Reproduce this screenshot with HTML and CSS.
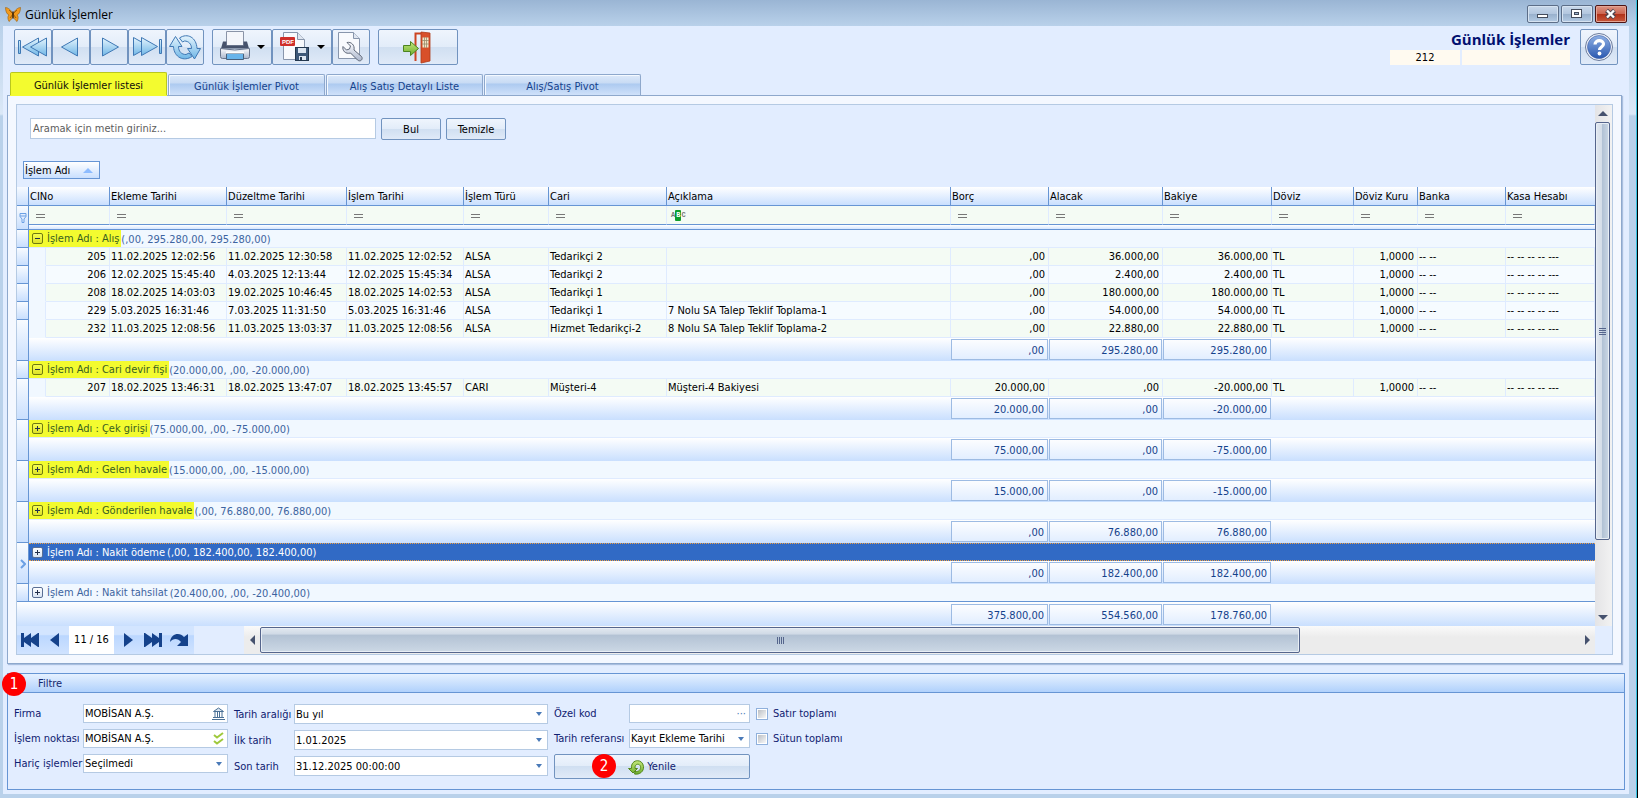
FILE: index.html
```html
<!DOCTYPE html>
<html lang="tr">
<head>
    <meta charset="UTF-8">
    <meta name="viewport" content="width=device-width, initial-scale=1.0">
    <title>Günlük İşlemler</title>
    <link rel="stylesheet" href="styles.css">
</head>
<body>

    <!-- Shared gradients for the icons -->
    <svg class="defs" aria-hidden="true">
        <defs>
            <linearGradient id="iceBlue" x1="0" y1="0" x2="0" y2="1">
                <stop offset="0" stop-color="#e4f4fd"/><stop offset="1" stop-color="#6fb6e6"/>
            </linearGradient>
            <linearGradient id="steel" x1="0" y1="0" x2="0" y2="1">
                <stop offset="0" stop-color="#fdfdff"/><stop offset="1" stop-color="#aab6cc"/>
            </linearGradient>
            <linearGradient id="leaf" x1="0" y1="0" x2="0" y2="1">
                <stop offset="0" stop-color="#c4e77c"/><stop offset="1" stop-color="#6cae2c"/>
            </linearGradient>
            <linearGradient id="deepBlue" x1="0" y1="0" x2="0" y2="1">
                <stop offset="0" stop-color="#8fb0e4"/><stop offset="1" stop-color="#2a58b0"/>
            </linearGradient>
        </defs>
    </svg>

    <div class="window">

        <!-- Title bar -->
        <header class="title-bar">
            <svg class="app-icon" viewBox="0 0 16 15">
                <path d="M8 6.500C6 3 3 .5 .5 .5 .6 4 1.500 7 4 8 2.500 9 2.500 12 4 14.500 6 13 7.500 11 8 8z" fill="#f29a1c" stroke="#9a5c08" stroke-width=".6"/>
                <path d="M8 6.500C10 3 13 .5 15.500 .5 15.400 4 14.500 7 12 8 13.500 9 13.500 12 12 14.500 10 13 8.500 11 8 8z" fill="#f29a1c" stroke="#9a5c08" stroke-width=".6"/>
                <path d="M4 3l4 4 4-4M5 11l3-4 3 4" stroke="#8a5208" stroke-width=".8" fill="none"/>
                <path d="M8 4.500v7" stroke="#3c2408" stroke-width="1.400"/>
            </svg>
            <h1>Günlük İşlemler</h1>
            <div class="window-buttons">
                <button type="button" aria-label="Simge durumuna küçült"><svg viewBox="0 0 30 16"><rect x="9.500" y="8.500" width="10" height="3" fill="#fff" stroke="#444c5c"/></svg></button>
                <button type="button" aria-label="Ekranı kapla"><svg viewBox="0 0 30 16"><rect x="9.500" y="3.500" width="10" height="8" fill="#fff" stroke="#444c5c"/><rect x="12.500" y="6.500" width="4" height="2" fill="#9db4cf" stroke="#444c5c"/></svg></button>
                <button type="button" class="close" aria-label="Kapat"><svg viewBox="0 0 30 16"><path d="M10.500 4.500l8 7m0-7l-8 7" stroke="#4c4450" stroke-width="4.400"/><path d="M11 4.500l7 7m0-7l-7 7" stroke="#fff" stroke-width="2.400"/></svg></button>
            </div>
        </header>

        <main class="content">

            <!-- Toolbar -->
            <div class="toolbar">
                <div class="tool-group">
                    <button type="button" class="tool" aria-label="İlk kayıt"><svg viewBox="0 0 36 34" fill="url(#iceBlue)" stroke="#3f78b4"><path d="M3.500 10.500h2v13h-2zM23.500 8v18L7.500 17z"/><path d="M31.500 8v18l-16-9z"/></svg></button>
                    <button type="button" class="tool" aria-label="Önceki kayıt"><svg viewBox="0 0 36 34" fill="url(#iceBlue)" stroke="#3f78b4"><path d="M24.500 8v18L8.500 17z"/></svg></button>
                    <button type="button" class="tool" aria-label="Sonraki kayıt"><svg viewBox="0 0 36 34" fill="url(#iceBlue)" stroke="#3f78b4"><path d="M11.500 8v18l16-9z"/></svg></button>
                    <button type="button" class="tool" aria-label="Son kayıt"><svg viewBox="0 0 36 34" fill="url(#iceBlue)" stroke="#3f78b4"><path d="M4.500 7.500v18l16-9z"/><path d="M12.500 7.500v18l16-9z"/><path d="M30.500 9.500h2v14h-2z"/></svg></button>
                    <button type="button" class="tool" aria-label="Yenile"><svg viewBox="0 0 36 34" fill="url(#iceBlue)" stroke="#3f78b4"><path d="M2.500 16.500 8.500 6.500l6.500 10h-3.500c0 5 3 8 7.500 8l3-1.500 3 3.500c-8 5.500-18 1-18.500-10z"/><path d="M33.500 18.500 27.500 29l-7-10.500h4c0-4.500-3-7.500-7-7.500l-2 1-3-4c8-5.500 17-.5 17.500 10.500z"/></svg></button>
                </div>
                <div class="tool-group">
                    <button type="button" class="tool split" aria-label="Yazdır">
                        <svg viewBox="0 0 44 34"><path d="M13.500 1.500h17v14h-17z" fill="#f4f6fb" stroke="#8a94a8"/><path d="M10 11.500h3.500v4h17v-4h3.500l2 7H8z" fill="#46526c"/><path d="M7.500 18.500q14 3 29 0v8q0 2-2 2h-25q-2 0-2-2z" fill="url(#steel)" stroke="#68748c"/><path d="M13.500 23.500h17v6h-17z" fill="#69b4ea" stroke="#48607c"/><path d="M13 22.500h18" stroke="#fff" stroke-width="2"/></svg>
                        <span class="caret"></span>
                    </button>
                    <button type="button" class="tool split" aria-label="PDF olarak kaydet">
                        <svg viewBox="0 0 44 34"><path d="M10.500 2.500h14l7 7v20h-21z" fill="#f8fafd" stroke="#8896ac"/><path d="M24.500 2.500v7h7" fill="#dfe6f0" stroke="#8896ac"/><rect x="7" y="7" width="15" height="9" rx="1" fill="#cf2f2a"/><text x="9" y="14" class="pdf-label">PDF</text><rect x="22.500" y="17.500" width="13" height="13" fill="#3d5878" stroke="#24384f"/><path d="M25 18h8v5h-8zM26 26h7v4h-7z" fill="#dce6f1"/><path d="M27 27h2v3h-2z" fill="#24384f"/></svg>
                        <span class="caret"></span>
                    </button>
                    <button type="button" class="tool" aria-label="Ayarlar"><svg viewBox="0 0 36 34"><path d="M5.500 2.500h15l6 6v20h-21z" fill="#f8fafd" stroke="#8896ac"/><path d="M20.500 2.500v6h6" fill="#dfe6f0" stroke="#8896ac"/><path d="M14 12.500l3.500 3.500-1 3-3 1-3.500-3.500c-1 4 2.500 8 7.500 6.500l7 7c3 2.500 6-1 4-3.500l-7.500-6.500c1-5-3-8.500-7-7.500z" fill="url(#steel)" stroke="#5f6878"/></svg></button>
                </div>
                <button type="button" class="tool exit" aria-label="Çıkış"><svg viewBox="0 0 36 34"><path d="M15.500 31v-27.500h8" fill="none" stroke="#cc4422" stroke-width="2"/><path d="M21 2l9 1v28l-9 2z" fill="#d8502a" stroke="#b03a18" stroke-width=".8"/><path d="M22.500 7.500h6v10h-6z" fill="#f2e6c8"/><path d="M24.500 7v11M26.500 7v11M22 10.500h7M22 14h7" stroke="#9a8c6a" stroke-width=".8"/><path d="M3.500 15.500h7v-4l8 7-8 7v-4h-7z" fill="url(#leaf)" stroke="#4c8420"/></svg></button>
                <div class="form-title">
                    <h2>Günlük İşlemler</h2>
                    <div class="form-codes"><span>212</span><span></span></div>
                </div>
                <button type="button" class="tool" aria-label="Yardım"><svg viewBox="0 0 36 34"><circle cx="18" cy="17" r="13.500" fill="#eef2fa" stroke="#6c7c9c"/><circle cx="18" cy="17" r="11.500" fill="url(#deepBlue)" stroke="#3f62a8" stroke-width=".6"/><path d="M14 14.500c0-5 8.500-5 8.500-.5 0 3-4 3-4 6" fill="none" stroke="#fff" stroke-width="3.200"/><circle cx="18.500" cy="23.500" r="1.900" fill="#fff"/></svg></button>
            </div>

            <!-- Tabs -->
            <nav class="tabs">
                <button type="button" class="tab active">Günlük İşlemler listesi</button>
                <button type="button" class="tab">Günlük İşlemler Pivot</button>
                <button type="button" class="tab">Alış Satış Detaylı Liste</button>
                <button type="button" class="tab">Alış/Satış Pivot</button>
            </nav>

            <section class="tab-page">
                <div class="grid-box">
                    <div class="grid-main">
                        <div class="search-bar">
                            <input type="text" class="search-input" placeholder="Aramak için metin giriniz..." aria-label="Ara">
                            <button type="button" class="btn">Bul</button>
                            <button type="button" class="btn">Temizle</button>
                        </div>
                        <button type="button" class="group-chip">İşlem Adı <span class="sort-up"></span></button>

                        <table class="data-grid">
                            <colgroup>
                                <col class="w-head"><col class="w-indent"><col class="w-no"><col class="w-date"><col class="w-edit"><col class="w-date"><col class="w-type"><col class="w-cari"><col><col class="w-borc"><col class="w-alacak"><col class="w-bakiye"><col class="w-doviz"><col class="w-kur"><col class="w-banka"><col class="w-kasa">
                            </colgroup>
                            <thead>
                                <tr>
                                    <th class="rh"></th><th colspan="2">CINo</th><th>Ekleme Tarihi</th><th>Düzeltme Tarihi</th><th>İşlem Tarihi</th><th>İşlem Türü</th><th>Cari</th><th>Açıklama</th><th>Borç</th><th>Alacak</th><th>Bakiye</th><th>Döviz</th><th>Döviz Kuru</th><th>Banka</th><th>Kasa Hesabı</th>
                                </tr>
                                <tr class="filter-row">
                                    <td class="rh" rowspan="2"><svg class="funnel" viewBox="0 0 8 10"><path d="M1 .5h6v3L5 6v3.500H3V6L1 3.500zM1 3h6" fill="#e2edff" stroke="#6ba0e4"/></svg></td>
                                    <td colspan="2"><i class="eq"></i></td><td><i class="eq"></i></td><td><i class="eq"></i></td><td><i class="eq"></i></td><td><i class="eq"></i></td><td><i class="eq"></i></td>
                                    <td><span class="abc">A<b>B</b>C</span></td>
                                    <td><i class="eq"></i></td><td><i class="eq"></i></td><td><i class="eq"></i></td><td><i class="eq"></i></td><td><i class="eq"></i></td><td><i class="eq"></i></td><td><i class="eq"></i></td>
                                </tr>
                                <tr class="divider-row"><td colspan="15"></td></tr>
                            </thead>
                            <tbody>
                                <!-- Alış -->
                                <tr class="group-row">
                                    <td class="rh"></td>
                                    <td colspan="15"><div class="group-line"><span class="mark"><button type="button" class="toggle open" aria-label="Daralt"></button>İşlem Adı : Alış</span> (,00, 295.280,00, 295.280,00)</div></td>
                                </tr>
                                <tr class="row">
                                    <td class="rh"></td><td class="indent"></td><td class="num">205</td><td>11.02.2025 12:02:56</td><td>11.02.2025 12:30:58</td><td>11.02.2025 12:02:52</td><td>ALSA</td><td>Tedarikçi 2</td><td></td><td class="num">,00</td><td class="num">36.000,00</td><td class="num">36.000,00</td><td>TL</td><td class="num">1,0000</td><td>-- --</td><td>-- -- -- -- ---</td>
                                </tr>
                                <tr class="row alt">
                                    <td class="rh"></td><td class="indent"></td><td class="num">206</td><td>12.02.2025 15:45:40</td><td>4.03.2025 12:13:44</td><td>12.02.2025 15:45:34</td><td>ALSA</td><td>Tedarikçi 2</td><td></td><td class="num">,00</td><td class="num">2.400,00</td><td class="num">2.400,00</td><td>TL</td><td class="num">1,0000</td><td>-- --</td><td>-- -- -- -- ---</td>
                                </tr>
                                <tr class="row">
                                    <td class="rh"></td><td class="indent"></td><td class="num">208</td><td>18.02.2025 14:03:03</td><td>19.02.2025 10:46:45</td><td>18.02.2025 14:02:53</td><td>ALSA</td><td>Tedarikçi 1</td><td></td><td class="num">,00</td><td class="num">180.000,00</td><td class="num">180.000,00</td><td>TL</td><td class="num">1,0000</td><td>-- --</td><td>-- -- -- -- ---</td>
                                </tr>
                                <tr class="row alt">
                                    <td class="rh"></td><td class="indent"></td><td class="num">229</td><td>5.03.2025 16:31:46</td><td>7.03.2025 11:31:50</td><td>5.03.2025 16:31:46</td><td>ALSA</td><td>Tedarikçi 1</td><td>7 Nolu SA Talep Teklif Toplama-1</td><td class="num">,00</td><td class="num">54.000,00</td><td class="num">54.000,00</td><td>TL</td><td class="num">1,0000</td><td>-- --</td><td>-- -- -- -- ---</td>
                                </tr>
                                <tr class="row">
                                    <td class="rh" rowspan="2"></td><td class="indent"></td><td class="num">232</td><td>11.03.2025 12:08:56</td><td>11.03.2025 13:03:37</td><td>11.03.2025 12:08:56</td><td>ALSA</td><td>Hizmet Tedarikçi-2</td><td>8 Nolu SA Talep Teklif Toplama-2</td><td class="num">,00</td><td class="num">22.880,00</td><td class="num">22.880,00</td><td>TL</td><td class="num">1,0000</td><td>-- --</td><td>-- -- -- -- ---</td>
                                </tr>
                                <tr class="sum-row">
                                    <td colspan="8"></td><td><div class="sum">,00</div></td><td><div class="sum">295.280,00</div></td><td><div class="sum">295.280,00</div></td><td colspan="4"></td>
                                </tr>

                                <!-- Cari devir fişi -->
                                <tr class="group-row">
                                    <td class="rh"></td>
                                    <td colspan="15"><div class="group-line"><span class="mark"><button type="button" class="toggle open" aria-label="Daralt"></button>İşlem Adı : Cari devir fişi</span> (20.000,00, ,00, -20.000,00)</div></td>
                                </tr>
                                <tr class="row">
                                    <td class="rh" rowspan="2"></td><td class="indent"></td><td class="num">207</td><td>18.02.2025 13:46:31</td><td>18.02.2025 13:47:07</td><td>18.02.2025 13:45:57</td><td>CARI</td><td>Müşteri-4</td><td>Müşteri-4 Bakiyesi</td><td class="num">20.000,00</td><td class="num">,00</td><td class="num">-20.000,00</td><td>TL</td><td class="num">1,0000</td><td>-- --</td><td>-- -- -- -- ---</td>
                                </tr>
                                <tr class="sum-row">
                                    <td colspan="8"></td><td><div class="sum">20.000,00</div></td><td><div class="sum">,00</div></td><td><div class="sum">-20.000,00</div></td><td colspan="4"></td>
                                </tr>

                                <!-- Collapsed groups -->
                                <tr class="group-row">
                                    <td class="rh" rowspan="2"></td>
                                    <td colspan="15"><div class="group-line"><span class="mark"><button type="button" class="toggle" aria-label="Genişlet"></button>İşlem Adı : Çek girişi</span> (75.000,00, ,00, -75.000,00)</div></td>
                                </tr>
                                <tr class="sum-row">
                                    <td colspan="8"></td><td><div class="sum">75.000,00</div></td><td><div class="sum">,00</div></td><td><div class="sum">-75.000,00</div></td><td colspan="4"></td>
                                </tr>
                                <tr class="group-row">
                                    <td class="rh" rowspan="2"></td>
                                    <td colspan="15"><div class="group-line"><span class="mark"><button type="button" class="toggle" aria-label="Genişlet"></button>İşlem Adı : Gelen havale</span> (15.000,00, ,00, -15.000,00)</div></td>
                                </tr>
                                <tr class="sum-row">
                                    <td colspan="8"></td><td><div class="sum">15.000,00</div></td><td><div class="sum">,00</div></td><td><div class="sum">-15.000,00</div></td><td colspan="4"></td>
                                </tr>
                                <tr class="group-row">
                                    <td class="rh" rowspan="2"></td>
                                    <td colspan="15"><div class="group-line"><span class="mark"><button type="button" class="toggle" aria-label="Genişlet"></button>İşlem Adı : Gönderilen havale</span> (,00, 76.880,00, 76.880,00)</div></td>
                                </tr>
                                <tr class="sum-row">
                                    <td colspan="8"></td><td><div class="sum">,00</div></td><td><div class="sum">76.880,00</div></td><td><div class="sum">76.880,00</div></td><td colspan="4"></td>
                                </tr>
                                <tr class="group-row selected">
                                    <td class="rh" rowspan="2"><svg class="row-arrow" viewBox="0 0 6 10"><path d="M1 1l4 4-4 4" fill="none" stroke="#6ba0e4" stroke-width="2"/></svg></td>
                                    <td colspan="15"><div class="group-line"><span class="plain"><button type="button" class="toggle" aria-label="Genişlet"></button>İşlem Adı : Nakit ödeme</span> (,00, 182.400,00, 182.400,00)</div></td>
                                </tr>
                                <tr class="sum-row">
                                    <td colspan="8"></td><td><div class="sum">,00</div></td><td><div class="sum">182.400,00</div></td><td><div class="sum">182.400,00</div></td><td colspan="4"></td>
                                </tr>
                                <tr class="group-row last">
                                    <td class="rh"></td>
                                    <td colspan="15"><div class="group-line"><span class="plain"><button type="button" class="toggle" aria-label="Genişlet"></button>İşlem Adı : Nakit tahsilat</span> (20.400,00, ,00, -20.400,00)</div></td>
                                </tr>
                            </tbody>
                            <tfoot>
                                <tr class="sum-row">
                                    <td colspan="9"></td><td><div class="sum">375.800,00</div></td><td><div class="sum">554.560,00</div></td><td><div class="sum">178.760,00</div></td><td colspan="4"></td>
                                </tr>
                            </tfoot>
                        </table>
                    </div>

                    <div class="v-scroll">
                        <span class="arrow up"></span>
                        <div class="thumb"><i></i><i></i><i></i><i></i></div>
                        <div class="track"></div>
                        <span class="arrow down"></span>
                    </div>

                    <div class="grid-bottom">
                        <div class="pager">
                            <button type="button" aria-label="İlk"><svg viewBox="0 0 18 14"><path d="M0 0h3v5l7-5v5l7-5h1v14h-1l-7-5v5L3 9v5H0z"/></svg></button>
                            <button type="button" aria-label="Önceki"><svg viewBox="0 0 18 14"><path d="M12 0v14L3 7z"/></svg></button>
                            <span class="page-no">11 / 16</span>
                            <button type="button" aria-label="Sonraki"><svg viewBox="0 0 18 14"><path d="M6 0v14l9-7z"/></svg></button>
                            <button type="button" aria-label="Son"><svg viewBox="0 0 18 14"><path d="M18 0h-3v5L8 0v5L1 0H0v14h1l7-5v5l7-5v5h3z"/></svg></button>
                            <button type="button" aria-label="Git"><svg viewBox="0 0 18 14"><path d="M0 9C1 0 10-1 14 4l4-3v12H7l4-4C8 5 3 5 0 9z"/></svg></button>
                        </div>
                        <div class="h-scroll">
                            <span class="arrow left"></span>
                            <div class="thumb"><i></i><i></i><i></i><i></i></div>
                            <div class="track"></div>
                            <span class="arrow right"></span>
                        </div>
                    </div>
                </div>
            </section>

            <!-- Filter panel -->
            <section class="filter-panel">
                <span class="badge badge-panel">1</span>
                <h3>Filtre</h3>
                <form class="filter-form">
                    <div class="fields narrow">
                        <label for="firma">Firma</label>
                        <div class="field">
                            <input type="text" id="firma" value="MOBİSAN A.Ş.">
                            <svg viewBox="0 0 13 13" stroke="#4a7096" fill="none"><path d="M1.500 4.500 6.500 1l5 3.500z" fill="#dbe6f1"/><path d="M3 5v6M5.500 5v6M7.500 5v6M10 5v6M1 10.500h11M0 12.500h13"/></svg>
                        </div>
                        <label for="nokta">İşlem noktası</label>
                        <div class="field">
                            <input type="text" id="nokta" value="MOBİSAN A.Ş.">
                            <svg viewBox="0 0 13 13" stroke="#9fc93c" stroke-width="2" fill="none"><path d="M2 3l3 2.500L11 1M2 9l3 2.500L11 7"/></svg>
                        </div>
                        <label for="haric">Hariç işlemler</label>
                        <div class="field drop"><select id="haric"><option>Seçilmedi</option></select></div>
                    </div>
                    <div class="fields wide">
                        <label for="aralik">Tarih aralığı</label>
                        <div class="field drop"><select id="aralik"><option>Bu yıl</option></select></div>
                        <label for="ilk">İlk tarih</label>
                        <div class="field drop"><select id="ilk"><option>1.01.2025</option></select></div>
                        <label for="son">Son tarih</label>
                        <div class="field drop"><select id="son"><option>31.12.2025 00:00:00</option></select></div>
                    </div>
                    <div class="fields codes">
                        <label for="kod">Özel kod</label>
                        <div class="field"><input type="text" id="kod"><span class="dots">···</span></div>
                        <label for="ref">Tarih referansı</label>
                        <div class="field drop"><select id="ref"><option>Kayıt Ekleme Tarihi</option></select></div>
                        <button type="button" class="btn refresh">
                            <span class="badge badge-refresh">2</span>
                            <svg viewBox="0 0 16 15"><path d="M.5 8.500h3C2.500-1 14.500-2 15.500 6.500c.5 5-4 8.500-9 7.500l.5-2.500c4 .5 6-2 5.500-5C11.500 3 6.500 3.500 7 8.500h2.500L5 13z" fill="url(#leaf)" stroke="#55881c"/></svg>
                            Yenile
                        </button>
                    </div>
                    <div class="checks">
                        <label><input type="checkbox"> Satır toplamı</label>
                        <label><input type="checkbox"> Sütun toplamı</label>
                    </div>
                </form>
            </section>
        </main>
    </div>

</body>
</html>
```
FILE: styles.css
```css
* {
    box-sizing: border-box;
}

body {
    margin: 0;
    font-family: "DejaVu Sans Condensed", "DejaVu Sans", Tahoma, sans-serif;
    font-size: 11px;
    line-height: 16px;
    color: #000;
    background: #b9d1ea;
}

button, input, select {
    font: inherit;
    color: inherit;
    margin: 0;
}

button {
    padding: 0;
}

h1, h2, h3 {
    margin: 0;
    font-weight: normal;
}

.defs {
    position: absolute;
    width: 0;
    height: 0;
}

/* Window frame */
.window {
    min-height: 100vh;
    display: flex;
    flex-direction: column;
    border-right: 1px solid #000;
    background: linear-gradient(#9ab5d4, #b9d1ea 26px, #dbe8f7 114px, #b9d1ea 116px);
    padding: 0 8px 4px 3px;
    box-shadow: inset -1px 0 #35c3e0;
}

.title-bar {
    display: flex;
    align-items: center;
    height: 26px;
    padding-left: 2px;
}

.title-bar h1 {
    flex: 1;
    font-family: "Open Sans", "Noto Sans", sans-serif;
    font-size: 12px;
    padding: 3px 0 0 4px;
}

.app-icon {
    width: 16px;
    height: 15px;
    margin-top: 2px;
}

.window-buttons {
    display: flex;
    gap: 2px;
    padding: 2px 2px 0 0;
}

.window-buttons button {
    width: 32px;
    height: 18px;
    border: 1px solid #5c6e88;
    border-radius: 2px;
    background: linear-gradient(#c8d8ea, #b2c6de 50%, #98b0cc 50%, #b4cbe4);
    box-shadow: inset 0 0 0 1px #d6e3f1;
}

.window-buttons .close {
    border-color: #4e1414;
    background: linear-gradient(#dc9484, #cc6450 50%, #b03018 50%, #c8583c);
    box-shadow: inset 0 0 0 1px #e4a494;
}

.window-buttons svg {
    display: block;
    width: 30px;
    height: 16px;
}

.content {
    flex: 1;
    background: #e2edff;
    padding: 3px 4px 4px 4px;
}

/* Toolbar */
.toolbar {
    display: flex;
    gap: 8px;
    padding: 0 7px;
}

.tool-group {
    display: flex;
}

.tool, .btn {
    border: 1px solid #7193bf;
    border-radius: 2px;
    background: linear-gradient(#eff5fd, #e2ecf9 50%, #d0dff1 50%, #e0eaf8);
}

.tool {
    display: flex;
    align-items: center;
    width: 38px;
    height: 36px;
}

.tool svg {
    width: 36px;
    height: 34px;
}

.tool.split {
    width: 60px;
}

.tool.split svg {
    width: 44px;
}

.caret {
    border: 4px solid transparent;
    border-top-color: #000;
    border-bottom: 0;
}

.tool.exit {
    width: 80px;
    justify-content: center;
}

.pdf-label {
    font: bold 6px "Liberation Sans", sans-serif;
    fill: #fff;
}

.form-title {
    margin-left: auto;
    margin-right: 2px;
    width: 180px;
}

.form-title h2 {
    font-family: "Open Sans", "Noto Sans", sans-serif;
    font-size: 15px;
    font-weight: bold;
    line-height: 21px;
    color: #000f70;
    text-align: right;
    white-space: nowrap;
}

.form-codes {
    display: grid;
    grid-template-columns: 70px 1fr;
    gap: 2px;
}

.form-codes span {
    height: 15px;
    line-height: 16px;
    text-align: center;
    background: #fffaf0;
}

/* Tabs */
.tabs {
    display: flex;
    align-items: flex-end;
    gap: 1px;
    height: 30px;
    padding-left: 3px;
}

.tab {
    width: 157px;
    height: 21px;
    padding-top: 3px;
    border: 1px solid #8ea8cc;
    border-bottom: 0;
    border-radius: 2px 2px 0 0;
    box-shadow: inset 1px 1px #f4f9ff;
    background: linear-gradient(#dde9fa, #c8dbf4 40%, #adcaf0 45%, #cfe1fa);
    color: #15428b;
}

.tab.active {
    height: 23px;
    border-color: #b9c71e;
    box-shadow: 0 1px #f3fb2f;
    background: #f3fb2f;
    color: #10100a;
}

.tab-page {
    border: 1px solid #8ea8cc;
    box-shadow: 1px 1px 1px #a9bfdf;
    background: #f4f8ff;
    padding: 8px;
    margin-right: 3px;
}

.grid-box {
    display: grid;
    grid-template-columns: minmax(0, 1fr) 17px;
    border: 1px solid #b5cae3;
    background: #e2edff;
}

.search-bar {
    display: flex;
    gap: 5px;
    padding: 13px 0 21px 13px;
}

.search-input {
    width: 346px;
    height: 21px;
    border: 1px solid #b5cae3;
    padding: 0 2px;
    background: #fff;
}

.search-input::placeholder {
    color: #5c5c5c;
    opacity: 1;
}

.btn {
    width: 60px;
    height: 22px;
    padding-top: 1px;
}

.group-chip {
    display: flex;
    align-items: center;
    justify-content: space-between;
    width: 77px;
    height: 18px;
    margin: 0 0 8px 6px;
    padding: 1px 6px 0 1px;
    border: 1px solid #6695d4;
    background: linear-gradient(#fff, #c9dffe);
}

.sort-up {
    border: 5px solid transparent;
    border-bottom-color: #8dbcff;
    border-top: 0;
}

/* Data grid */
.data-grid {
    width: 100%;
    table-layout: fixed;
    border-collapse: separate;
    border-spacing: 0;
}

.w-head { width: 12px; }
.w-indent { width: 17px; }
.w-no { width: 64px; }
.w-date { width: 117px; }
.w-edit { width: 120px; }
.w-type { width: 85px; }
.w-cari { width: 118px; }
.w-borc { width: 98px; }
.w-alacak { width: 114px; }
.w-bakiye { width: 109px; }
.w-doviz { width: 82px; }
.w-kur { width: 64px; }
.w-banka { width: 88px; }
.w-kasa { width: 89px; }

.data-grid th,
.data-grid td {
    height: 18px;
    padding: 1px 3px 0 1px;
    font-weight: normal;
    text-align: left;
    white-space: nowrap;
    overflow: hidden;
    border-right: 1px solid #dfebff;
    border-bottom: 1px solid #dfebff;
}

.data-grid th {
    height: 19px;
    padding-top: 2px;
    border-right-color: #6695d4;
    border-bottom-color: #6695d4;
    background: linear-gradient(#fff, #c9dffe);
}

.data-grid th:last-child {
    border-right: 0;
}

.data-grid .rh {
    padding: 0;
    text-align: center;
    border-right-color: #6695d4;
    border-bottom-color: #6695d4;
    background: linear-gradient(#f8fbff, #c9dffe);
}

.data-grid .filter-row td {
    height: 19px;
    padding-left: 7px;
    background: #f4fbf4;
    border-bottom-color: #6695d4;
}

.data-grid .filter-row .rh {
    padding: 4px 0 0 0;
    background: linear-gradient(#f8fbff, #c9dffe);
}

.data-grid .divider-row td {
    height: 5px;
    padding: 0;
    border-right: 0;
    border-bottom-color: #6695d4;
    background: linear-gradient(#fff, #d5e6ff);
}

.eq {
    display: inline-block;
    width: 9px;
    height: 4px;
    border: solid #777;
    border-width: 1px 0;
    vertical-align: middle;
}

.abc {
    display: flex;
    align-items: center;
    margin-left: -3px;
    font: bold 7px/11px "Liberation Mono", monospace;
    color: #777;
}

.abc b {
    padding: 0 1px;
    color: #fff;
    background: #0f9d2c;
    border-radius: 1px;
}

.funnel {
    width: 8px;
    height: 10px;
}

.row-arrow {
    width: 6px;
    height: 10px;
}

.row td {
    background: #f4fbf4;
}

.row.alt td {
    background: #f6fbff;
}

.row .rh,
.row.alt .rh {
    background: linear-gradient(#f8fbff, #c9dffe);
}

.data-grid .row .indent {
    background: #f1f8ff;
    border-bottom-color: #f1f8ff;
}

.data-grid .num {
    text-align: right;
}

.data-grid .group-row td:last-child {
    padding: 0;
    border-right: 0;
    color: #3d64a0;
    background: #f1f8ff;
}

.group-line {
    display: flex;
    height: 17px;
    line-height: 19px;
}

.mark, .plain {
    display: flex;
    align-items: center;
    gap: 4px;
    padding: 0 2px 0 3px;
}

.mark {
    background: #f3fb2f;
    color: #39611f;
}

.toggle {
    position: relative;
    width: 11px;
    height: 11px;
    border: 1px solid #5a6f94;
    border-radius: 2px;
    background: linear-gradient(#fff, #d8e4f4);
}

.mark .toggle {
    border-color: #6f7a10;
    background: linear-gradient(#f6fd50, #dde228);
}

/* Plus and minus signs */
.toggle::before,
.toggle::after {
    content: "";
    position: absolute;
    left: 2px;
    top: 4px;
    width: 5px;
    height: 1px;
    background: #22304c;
}

.toggle::after {
    transform: rotate(90deg);
}

.toggle.open::after {
    display: none;
}

.data-grid .group-row.selected td:last-child {
    color: #fff;
    background: #316ac5;
    border-bottom: 1px dotted #f0a040;
}

.selected .group-line {
    border-top: 1px dotted #f0a040;
    line-height: 17px;
}

.data-grid .selected .rh {
    padding-top: 6px;
}

.data-grid .group-row.last td {
    border-bottom-color: #6695d4;
}

.data-grid .sum-row td:not(.rh) {
    height: 23px;
    padding: 0;
    border: 0;
    background: linear-gradient(#fff, #c9dffe);
}

.data-grid tfoot .sum-row td:not(.rh) {
    height: 24px;
}

.sum {
    height: 21px;
    margin-right: 1px;
    padding-right: 3px;
    line-height: 21px;
    text-align: right;
    color: #15428b;
    border: 1px solid #9dbbe3;
    background: linear-gradient(#fcfdff, #e2eeff);
}

/* Scroll bars */
.v-scroll {
    display: flex;
    flex-direction: column;
    background: linear-gradient(to right, #e4e4e6, #f2f2f2);
}

.arrow {
    display: flex;
    align-items: center;
    justify-content: center;
    width: 16px;
    height: 17px;
}

.arrow::before {
    content: "";
    border: 5px solid transparent;
}

.arrow.up::before {
    border-top: 0;
    border-bottom-color: #46526e;
}

.arrow.down::before {
    border-bottom: 0;
    border-top-color: #46526e;
}

.arrow.left::before {
    border-left: 0;
    border-right-color: #46526e;
}

.arrow.right::before {
    border-right: 0;
    border-left-color: #46526e;
}

.thumb {
    display: flex;
    align-items: center;
    justify-content: center;
    gap: 1px;
    border: 1px solid #55658c;
    border-radius: 2px;
    box-shadow: inset 0 0 0 1px #e8eef5;
}

.v-scroll .thumb {
    flex: 417;
    flex-direction: column;
    width: 15px;
    background: linear-gradient(to right, #e2e8f0, #d4dde8 45%, #b2c2d5 50%, #ccd8e5);
}

.v-scroll .track {
    flex: 69;
}

.v-scroll .thumb i {
    width: 7px;
    height: 1px;
    background: #55658c;
}

.grid-bottom {
    display: flex;
    gap: 50px;
    height: 28px;
}

.pager {
    display: flex;
    width: 177px;
    background: linear-gradient(#d3e5ff 30%, #bbd7ff 35%, #d0e3ff);
}

.pager button {
    width: 26px;
    border: 0;
    background: none;
}

.pager svg {
    display: block;
    width: 18px;
    height: 14px;
    margin: 0 auto;
    fill: #15428b;
}

.page-no {
    width: 45px;
    line-height: 28px;
    text-align: center;
    background: #fff;
}

.h-scroll {
    flex: 1;
    display: flex;
    align-items: center;
    background: linear-gradient(#fafafa, #ececec 40%);
}

.h-scroll .thumb {
    flex: 1040;
    height: 26px;
    background: linear-gradient(#e2e8f0, #d0dae6 25%, #b3c2d4 30%, #ccd8e5);
}

.h-scroll .track {
    flex: 279;
}

.h-scroll .thumb i {
    width: 1px;
    height: 7px;
    background: #55658c;
}

/* Filter panel */
.filter-panel {
    position: relative;
    margin-top: 9px;
    border: 1px solid #6695d4;
}

.filter-panel h3 {
    height: 19px;
    padding-left: 30px;
    font-size: 11px;
    line-height: 20px;
    color: #15286f;
    border-bottom: 1px solid #6695d4;
    background: linear-gradient(#e6f1ff, #b0d1fc);
}

.filter-form {
    display: flex;
    align-items: flex-start;
    gap: 6px;
    padding: 11px 6px 13px 6px;
    color: #0f2070;
}

.fields {
    display: grid;
    align-items: center;
    gap: 6px 0;
    grid-auto-rows: 19px;
}

.fields.narrow {
    grid-template-columns: 69px 145px;
}

.fields.wide {
    grid-template-columns: 60px 254px;
    grid-auto-rows: 20px;
}

.fields.codes {
    grid-template-columns: 75px 121px;
}

.fields label, .checks label {
    white-space: nowrap;
}

.fields.wide label {
    padding-top: 2px;
}

.field {
    display: flex;
    align-items: center;
    height: 100%;
    border: 1px solid #b5cae3;
    background: #fff;
    color: #000;
}

.field input,
.field select {
    flex: 1;
    min-width: 0;
    height: 100%;
    border: 0;
    padding: 0 1px;
    background: none;
    appearance: none;
}

.field select {
    padding-top: 1px;
}

.field svg {
    width: 13px;
    height: 13px;
    margin-right: 2px;
}

.drop::after {
    content: "";
    margin-right: 5px;
    border: 3px solid transparent;
    border-top: 4px solid #4a7ab8;
    border-bottom: 0;
}

.dots {
    margin-right: 3px;
    color: #4a7ab8;
}

.refresh {
    grid-column: 1 / 3;
    position: relative;
    align-self: start;
    display: flex;
    align-items: center;
    justify-content: center;
    gap: 3px;
    width: auto;
    height: 25px;
    color: #0f2070;
}

.refresh svg {
    width: 16px;
    height: 15px;
}

.checks {
    display: grid;
    gap: 6px;
    grid-auto-rows: 19px;
}

.checks label {
    display: flex;
    align-items: center;
    gap: 5px;
    padding-top: 1px;
}

.checks input {
    appearance: none;
    width: 12px;
    height: 12px;
    margin: 0;
    border: 1px solid #8fb0dc;
    background: linear-gradient(135deg, #b4b8be, #fff);
    box-shadow: inset 0 0 0 1px #fff;
}

/* Numbered markers lying over the form */
.badge {
    position: absolute;
    width: 24px;
    height: 24px;
    border-radius: 50%;
    background: #f00;
    color: #fff;
    font-size: 15px;
    line-height: 24px;
    text-align: center;
}

.badge-panel {
    left: -6px;
    top: -2px;
}

.badge-refresh {
    left: 37px;
    top: -1px;
}
```
